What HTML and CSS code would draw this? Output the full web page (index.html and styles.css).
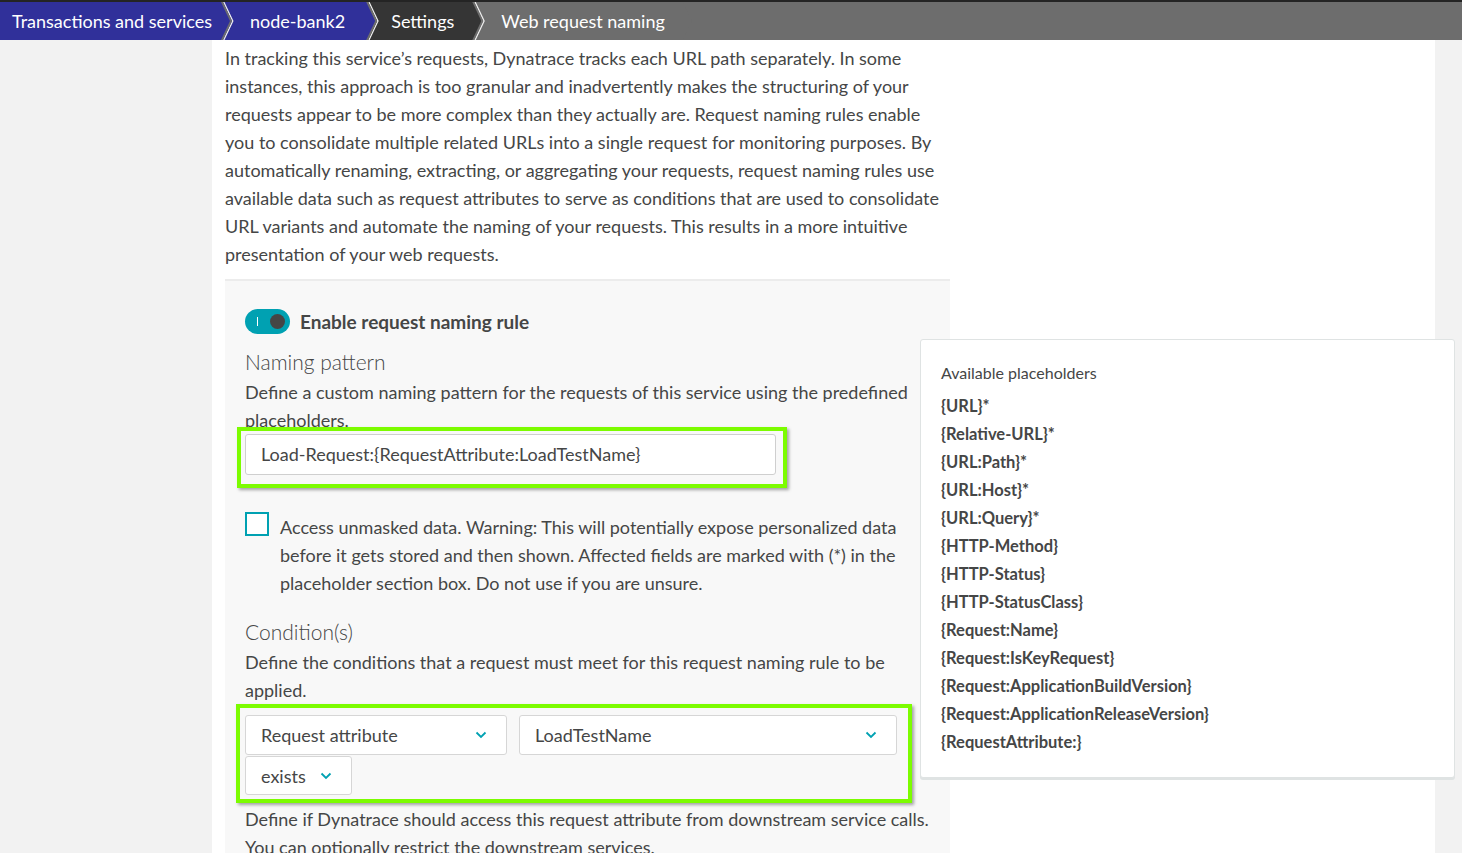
FILE: index.html
```html
<!DOCTYPE html>
<html lang="en">
<head>
<meta charset="utf-8">
<title>Web request naming</title>
<link rel="stylesheet" href="styles.css">
</head>
<body>
<div class="topstrip"></div>
<nav class="crumbs">
  <a class="crumb crumb-first crumb-blue">Transactions and services</a>
  <a class="crumb crumb-second crumb-blue">node-bank2</a>
  <a class="crumb crumb-dark">Settings</a>
  <span class="crumb crumb-last">Web request naming</span>
</nav>
<div class="page">
  <main class="main">
    <p class="intro">In tracking this service’s requests, Dynatrace tracks each URL path separately. In some instances, this approach is too granular and inadvertently makes the structuring of your requests appear to be more complex than they actually are. Request naming rules enable you to consolidate multiple related URLs into a single request for monitoring purposes. By automatically renaming, extracting, or aggregating your requests, request naming rules use available data such as request attributes to serve as conditions that are used to consolidate URL variants and automate the naming of your requests. This results in a more intuitive presentation of your web requests.</p>
    <section class="rule">
      <label class="toggle-row">
        <span class="toggle"><span class="toggle-mark"></span><span class="toggle-knob"></span></span>
        <span class="toggle-label">Enable request naming rule</span>
      </label>
      <h2 class="heading">Naming pattern</h2>
      <p class="desc">Define a custom naming pattern for the requests of this service using the predefined placeholders.</p>
      <div class="framed framed-input">
        <div class="input">Load-Request:{RequestAttribute:LoadTestName}</div>
        <div class="highlight"></div>
      </div>
      <div class="check-row">
        <span class="checkbox"></span>
        <p class="check-text">Access unmasked data. Warning: This will potentially expose personalized data before it gets stored and then shown. Affected fields are marked with (*) in the placeholder section box. Do not use if you are unsure.</p>
      </div>
      <h2 class="heading heading-cond">Condition(s)</h2>
      <p class="desc desc-cond">Define the conditions that a request must meet for this request naming rule to be applied.</p>
      <div class="framed framed-conds">
        <div class="selects">
          <div class="select select-attr"><span>Request attribute</span><svg class="chev" viewBox="0 0 12 8"><path d="M1.5 1.5 L6 6 L10.5 1.5"/></svg></div>
          <div class="select select-name"><span>LoadTestName</span><svg class="chev" viewBox="0 0 12 8"><path d="M1.5 1.5 L6 6 L10.5 1.5"/></svg></div>
          <div class="select select-op"><span>exists</span><svg class="chev" viewBox="0 0 12 8"><path d="M1.5 1.5 L6 6 L10.5 1.5"/></svg></div>
        </div>
        <div class="highlight"></div>
      </div>
      <p class="desc desc-down">Define if Dynatrace should access this request attribute from downstream service calls. You can optionally restrict the downstream services.</p>
    </section>
  </main>
  <aside class="placeholders">
    <h3 class="ph-title">Available placeholders</h3>
    <ul class="ph-list">
      <li>{URL}*</li>
      <li>{Relative-URL}*</li>
      <li>{URL:Path}*</li>
      <li>{URL:Host}*</li>
      <li>{URL:Query}*</li>
      <li>{HTTP-Method}</li>
      <li>{HTTP-Status}</li>
      <li>{HTTP-StatusClass}</li>
      <li>{Request:Name}</li>
      <li>{Request:IsKeyRequest}</li>
      <li>{Request:ApplicationBuildVersion}</li>
      <li>{Request:ApplicationReleaseVersion}</li>
      <li>{RequestAttribute:}</li>
    </ul>
  </aside>
</div>
</body>
</html>
```

FILE: styles.css
```css
* { box-sizing: border-box; }
html, body { margin: 0; padding: 0; }
body {
  background: #f2f2f2;
  font-family: Lato, "Noto Sans", sans-serif;
  color: #454646;
  overflow: hidden;
  height: 853px;
}
.topstrip { height: 2px; background: #242424; }
.crumbs {
  display: flex;
  height: 38px;
  background: #6d6d6d;
  font-size: 18px;
  color: #fff;
}
.crumb {
  display: flex;
  align-items: center;
  height: 38px;
  padding: 0 27px 0 23px;
  margin-right: -7px;
  white-space: nowrap;
  clip-path: polygon(0 0, calc(100% - 9px) 0, 100% 50%, calc(100% - 9px) 100%, 0 100%, 9px 50%);
  position: relative;
}
.crumb-first {
  padding: 0 18px 0 12px;
  clip-path: polygon(0 0, calc(100% - 9px) 0, 100% 50%, calc(100% - 9px) 100%, 0 100%);
}
.crumb-second { padding: 0 30px 0 27px; }
.crumb-blue { background: #30309a; }
.crumb-dark { background: #353535; }
.crumb-last { background: #6d6d6d; padding-left: 27px; }
.crumb + .crumb::before {
  content: "";
  position: absolute;
  left: 0; top: 0; bottom: 0;
  width: 11px;
  background: #ececec;
  clip-path: polygon(0 0, 1.5px 0, 10.5px 50%, 1.5px 100%, 0 100%, 9px 50%);
}
.page {
  position: relative;
  height: 813px;
  padding-left: 212px;
}
.main {
  width: 1223px;
  height: 100%;
  background: #fff;
  padding: 4px 0 0 13px;
}
.intro {
  margin: 0;
  width: 725px;
  font-size: 18px;
  line-height: 28px;
}
.rule {
  margin-top: 11px;
  width: 725px;
  height: 600px;
  background: #f8f8f8;
  border-top: 2px solid #ececec;
  padding: 28px 0 0 20px;
}
.toggle-row { display: flex; align-items: center; gap: 10px; height: 25px; }
.toggle {
  position: relative;
  width: 45px; height: 25px;
  border-radius: 13px;
  background: #00a1b2;
}
.toggle-mark {
  position: absolute; left: 12px; top: 8px;
  width: 1px; height: 9px; background: #fff;
}
.toggle-knob {
  position: absolute; right: 5px; top: 5px;
  width: 15px; height: 15px; border-radius: 50%;
  background: #454646;
}
.toggle-label { font-weight: 700; font-size: 19px; }
.heading {
  margin: 14px 0 0;
  font-size: 21px;
  font-weight: 300;
  line-height: 28px;
}
.desc { margin: 2px 0 0; font-size: 18px; line-height: 28px; width: 690px; }
.framed { position: relative; }
.highlight {
  position: absolute;
  border: 4px solid #7cfc00;
  box-shadow: 2px 2px 3px rgba(0,0,0,0.35);
  pointer-events: none;
}
.input {
  width: 531px; height: 41px;
  background: #fff;
  border: 1px solid #cfcfcf;
  border-radius: 3px;
  padding: 0 15px;
  font-size: 18px;
  line-height: 39px;
}
.framed-input .highlight { left: -8px; top: -7px; width: 550px; bottom: -13px; }
.check-row { display: flex; gap: 11px; margin-top: 38px; }
.checkbox {
  flex: none;
  width: 24px; height: 24px;
  border: 2px solid #00a1b2;
  background: #fff;
  margin-top: -1px;
}
.check-text { margin: 0; font-size: 18px; line-height: 28px; width: 640px; }
.heading-cond { margin-top: 21px; }
.desc-cond { width: 660px; }
.framed-conds { margin-top: 11px; }
.selects { display: flex; flex-wrap: wrap; column-gap: 12px; row-gap: 1px; width: 660px; }
.select {
  display: flex; align-items: center; justify-content: space-between;
  height: 40px;
  background: #fff;
  border: 1px solid #d6d6d6;
  border-radius: 3px;
  padding: 0 19px 0 15px;
  font-size: 18px;
}
.select-attr { width: 262px; }
.select-name { width: 378px; }
.select-op { width: 107px; height: 39px; }
.chev { width: 12px; height: 8px; fill: none; stroke: #00a1b2; stroke-width: 1.8; }
.framed-conds .highlight { left: -9px; top: -11px; width: 676px; bottom: -8px; }
.desc-down { margin-top: 10px; width: 700px; }
.placeholders {
  position: absolute;
  left: 920px; top: 299px;
  width: 535px; height: 439px;
  background: #fff;
  border: 1px solid #dfe3e3;
  border-radius: 3px;
  box-shadow: 0 2px 0 #dfe3e3;
  padding: 22px 20px 0 20px;
}
.ph-title { margin: 0; font-size: 16px; font-weight: 400; line-height: 22px; }
.ph-list { list-style: none; margin: 8px 0 0; padding: 0; }
.ph-list li { font-size: 16.5px; font-weight: 700; line-height: 28px; }
```
